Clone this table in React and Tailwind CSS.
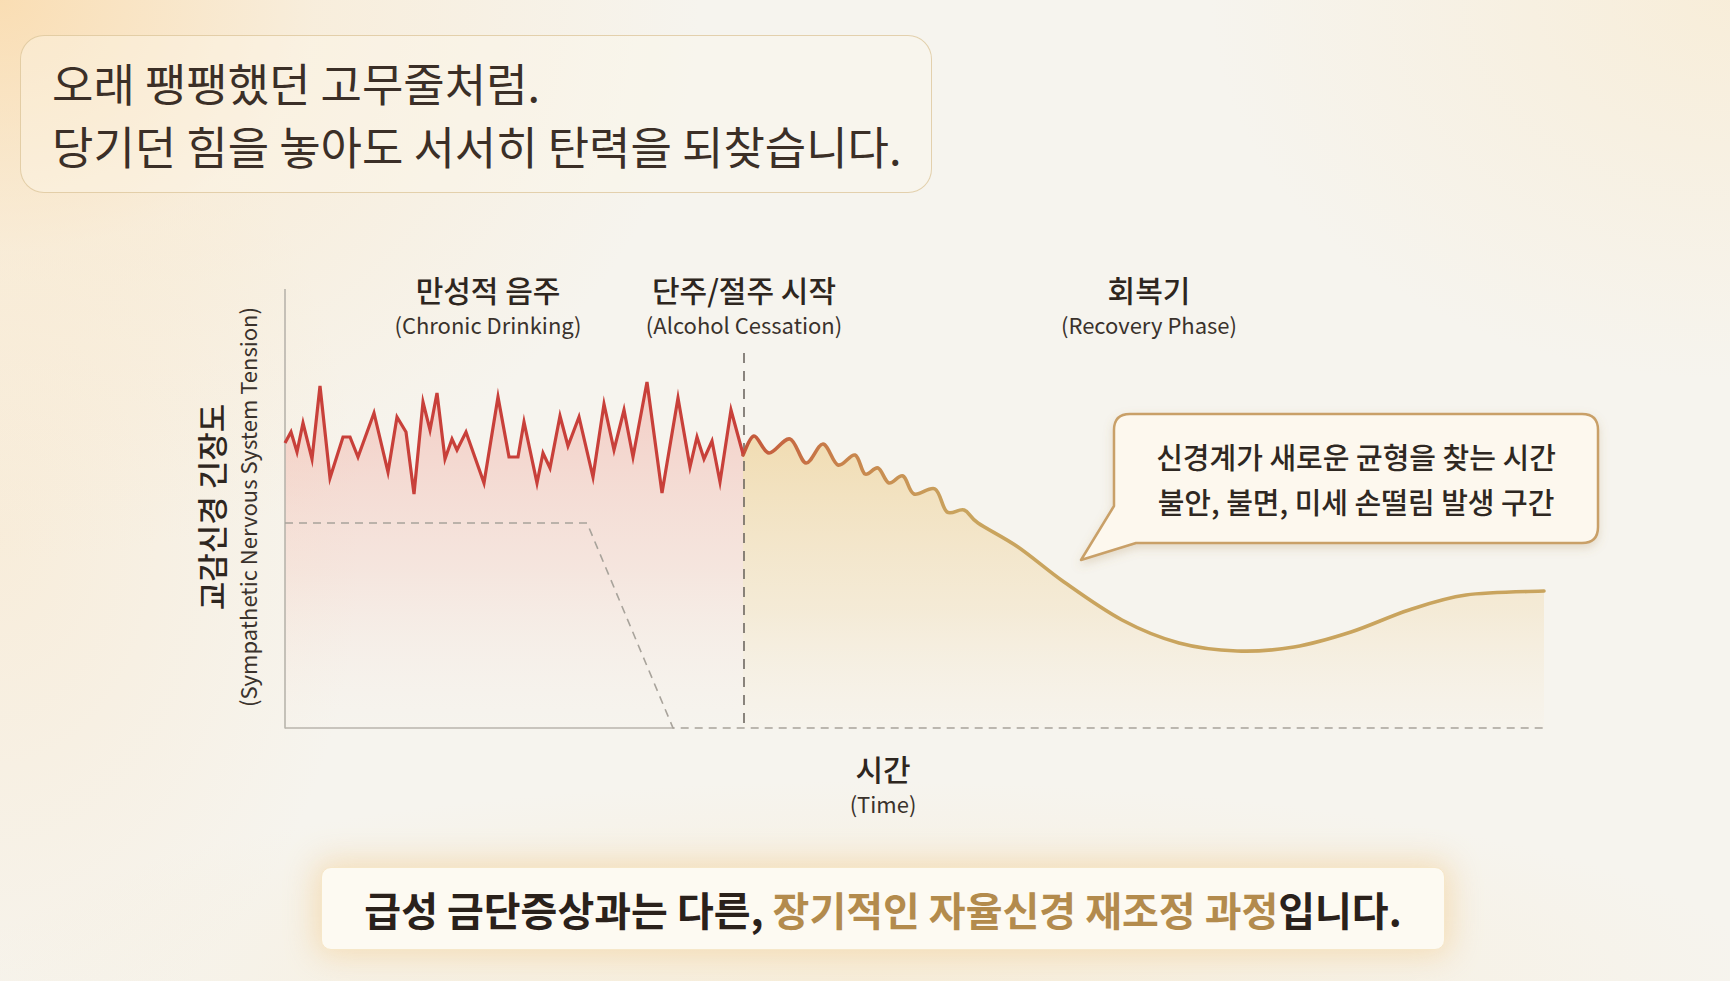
import React from "react";

const RED = [
  [285, 443], [291, 432], [297, 452], [303, 423], [312, 459], [320, 386], [330, 478],
  [343, 437], [350, 437], [358, 457], [374, 413], [388, 472], [397, 417], [406, 432],
  [414, 494], [423, 402], [430, 430], [437, 393], [445, 459], [452, 439], [457, 450],
  [466, 432], [484, 483], [498, 397], [509, 457], [518, 457], [524, 422], [537, 483],
  [543, 453], [550, 468], [560, 416], [568, 446], [579, 417], [593, 477], [604, 404],
  [614, 450], [624, 410], [633, 457], [647, 382], [662, 493], [678, 398], [690, 467],
  [697, 437], [704, 459], [712, 441], [720, 482], [731, 410], [743, 454],
];

const GOLD = [
  [743, 455], [754, 436], [769, 453], [790, 439], [806, 463], [823, 444], [838, 465],
  [855, 455], [865, 474], [878, 468], [889, 483], [903, 476], [914, 494], [935, 489],
  [947, 512], [964, 510], [978, 523], [1018, 547], [1064, 582], [1122, 620], [1179, 643],
  [1237, 651], [1294, 647], [1351, 632], [1409, 610], [1466, 595], [1544, 591],
];

function smooth(pts) {
  let d = `M ${pts[0][0]} ${pts[0][1]}`;
  for (let i = 0; i < pts.length - 1; i++) {
    const p0 = pts[i - 1] || pts[i];
    const p1 = pts[i];
    const p2 = pts[i + 1];
    const p3 = pts[i + 2] || p2;
    const c1x = p1[0] + (p2[0] - p0[0]) / 6;
    const c1y = p1[1] + (p2[1] - p0[1]) / 6;
    const c2x = p2[0] - (p3[0] - p1[0]) / 6;
    const c2y = p2[1] - (p3[1] - p1[1]) / 6;
    d += ` C ${c1x.toFixed(1)} ${c1y.toFixed(1)} ${c2x.toFixed(1)} ${c2y.toFixed(1)} ${p2[0]} ${p2[1]}`;
  }
  return d;
}

const redLine = "M " + RED.map((p) => p.join(" ")).join(" L ");
const redFill = redLine + " L 743 728 L 285 728 Z";
const goldLine = smooth(GOLD);
const goldFill = goldLine + " L 1544 728 L 743 728 Z";

const FONT = "font-['Noto_Sans_CJK_KR','Noto_Sans',sans-serif]";

function PhaseLabel({ x, top, title, sub }) {
  return (
    <div
      className="absolute flex -translate-x-1/2 flex-col items-center"
      style={{ left: x, top }}
    >
      <span className="whitespace-nowrap text-[30px] font-medium leading-[36px] text-[#2e2620]">{title}</span>
      <span className="mt-[2px] whitespace-nowrap text-[22px] leading-[30px] text-[#3a322c]">{sub}</span>
    </div>
  );
}

function Chart() {
  return (
    <div className="relative h-[674px] w-full">
      <svg
        width="1730"
        height="674"
        viewBox="0 193 1730 674"
        className="absolute left-0 top-0"
      >
        <defs>
          <linearGradient id="redFill" x1="0" y1="380" x2="0" y2="728" gradientUnits="userSpaceOnUse">
            <stop offset="0" stopColor="#ee8c80" stopOpacity="0.38" />
            <stop offset="0.55" stopColor="#f2b2a6" stopOpacity="0.22" />
            <stop offset="1" stopColor="#f6ede6" stopOpacity="0.05" />
          </linearGradient>
          <linearGradient id="goldFill" x1="0" y1="430" x2="0" y2="728" gradientUnits="userSpaceOnUse">
            <stop offset="0" stopColor="#f0d9aa" stopOpacity="0.9" />
            <stop offset="0.6" stopColor="#f3e4c6" stopOpacity="0.6" />
            <stop offset="1" stopColor="#f7f1e6" stopOpacity="0.3" />
          </linearGradient>
          <linearGradient id="goldStroke" x1="743" y1="0" x2="960" y2="0" gradientUnits="userSpaceOnUse">
            <stop offset="0" stopColor="#c4553a" />
            <stop offset="0.45" stopColor="#c8834c" />
            <stop offset="1" stopColor="#c9a45e" />
          </linearGradient>
          <filter id="bubbleShadow" x="-10%" y="-20%" width="120%" height="150%">
            <feDropShadow dx="0" dy="4" stdDeviation="5" floodColor="#a88650" floodOpacity="0.25" />
          </filter>
        </defs>

        <path d={redFill} fill="url(#redFill)" />
        <path d={goldFill} fill="url(#goldFill)" />

        <line x1="285" y1="289" x2="285" y2="728.5" stroke="#b8b4ac" strokeWidth="1.6" />
        <line x1="285" y1="728" x2="674" y2="728" stroke="#b8b4ac" strokeWidth="1.6" />

        <path
          d="M 285 523 L 587 523 L 673 728 L 1543 728"
          fill="none"
          stroke="#a8a39b"
          strokeWidth="1.6"
          strokeDasharray="8 6"
        />

        <line
          x1="744"
          y1="353"
          x2="744"
          y2="730"
          stroke="#6e6862"
          strokeWidth="1.6"
          strokeDasharray="10 8"
        />

        <path d={goldLine} fill="none" stroke="url(#goldStroke)" strokeWidth="3.6" strokeLinejoin="round" strokeLinecap="round" />
        <path d={redLine} fill="none" stroke="#c8403a" strokeWidth="3.2" strokeLinejoin="miter" strokeMiterlimit="6" />

        <path
          d="M 1130 414 H 1582 Q 1598 414 1598 430 V 527 Q 1598 543 1582 543 H 1136 L 1081 560 L 1114 506 V 430 Q 1114 414 1130 414 Z"
          fill="#fdf8ee"
          stroke="#c9a068"
          strokeWidth="2.5"
          strokeLinejoin="round"
          filter="url(#bubbleShadow)"
        />
      </svg>

      <PhaseLabel x={488} top={78} title="만성적 음주" sub="(Chronic Drinking)" />
      <PhaseLabel x={744} top={78} title="단주/절주 시작" sub="(Alcohol Cessation)" />
      <PhaseLabel x={1149} top={78} title="회복기" sub="(Recovery Phase)" />

      {/* y-axis label */}
      <div className="absolute left-[227px] top-[314px] flex -translate-x-1/2 -translate-y-1/2 -rotate-90 flex-col items-center">
        <span className="whitespace-nowrap text-[31px] font-medium leading-[40px] text-[#2e2620]">교감신경 긴장도</span>
        <span className="whitespace-nowrap text-[22px] leading-[32px] text-[#3a322c]">(Sympathetic Nervous System Tension)</span>
      </div>

      <PhaseLabel x={883} top={557} title="시간" sub="(Time)" />

      {/* bubble text */}
      <div className="absolute left-[1114px] top-[221px] flex h-[129px] w-[484px] flex-col items-center justify-center">
        <span className="whitespace-nowrap text-[29px] font-medium leading-[45px] text-[#2f2822]">신경계가 새로운 균형을 찾는 시간</span>
        <span className="whitespace-nowrap text-[29px] font-medium leading-[45px] text-[#2f2822]">불안, 불면, 미세 손떨림 발생 구간</span>
      </div>
    </div>
  );
}

export default function App() {
  return (
    <div
      className={`${FONT} relative flex h-[981px] w-[1730px] flex-col overflow-hidden bg-[#f6f4ee] bg-[radial-gradient(ellipse_700px_560px_at_0%_0%,rgba(251,214,160,0.75)_0%,rgba(250,230,198,0.45)_45%,rgba(246,244,238,0)_100%),radial-gradient(ellipse_520px_380px_at_100%_0%,rgba(249,232,200,0.55)_0%,rgba(246,244,238,0)_100%),radial-gradient(ellipse_360px_520px_at_0%_55%,rgba(250,228,195,0.45)_0%,rgba(246,244,238,0)_100%),radial-gradient(ellipse_900px_200px_at_50%_100%,rgba(248,228,190,0.4)_0%,rgba(246,244,238,0)_100%)]`}
    >
      <div className="ml-[20px] mt-[35px] flex h-[158px] w-[912px] flex-col justify-center rounded-[24px] border-[1.5px] border-[#d9c092]/70 bg-[#fcf7ec]/40 pl-[31px]">
        <p className="whitespace-nowrap text-[45px] leading-[63px] text-[#3b2f27]">오래 팽팽했던 고무줄처럼.</p>
        <p className="whitespace-nowrap text-[45px] leading-[63px] text-[#3b2f27]">당기던 힘을 놓아도 서서히 탄력을 되찾습니다.</p>
      </div>

      <Chart />

      <div className="ml-[321px] flex h-[83px] w-[1124px] items-center justify-center rounded-[10px] border border-[#f6e7c9] bg-[#fdfaf2] shadow-[0_0_30px_6px_rgba(242,198,128,0.45)]">
        <p className="whitespace-nowrap text-[40px] font-bold leading-none text-[#2a211b]">
          급성 금단증상과는 다른, <span className="text-[#b38b4d]">장기적인 자율신경 재조정 과정</span>입니다.
        </p>
      </div>
    </div>
  );
}
